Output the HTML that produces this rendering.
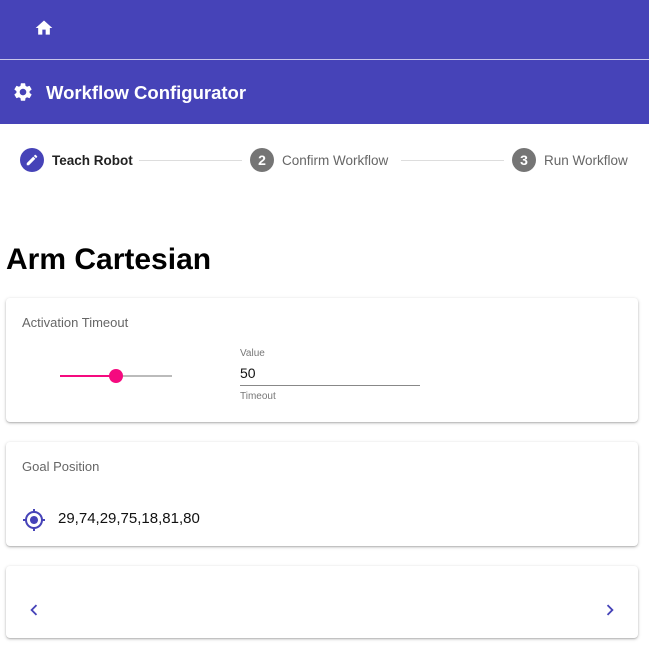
<!DOCTYPE html>
<html><head><style>
*{box-sizing:border-box;margin:0;padding:0}
body{width:649px;height:647px;overflow:hidden;background:#fff;font-family:"Liberation Sans",sans-serif;position:relative}
.abs{position:absolute}
.card{position:absolute;left:6px;width:632px;background:#fff;border-radius:4px;box-shadow:0 1px 3px rgba(0,0,0,.25),0 1px 1px rgba(0,0,0,.12)}
.lbl{position:absolute;left:16px;font-size:13px;color:#666}
.circ{position:absolute;width:24px;height:24px;border-radius:50%;color:#fff;font-size:14px;font-weight:bold;text-align:center;line-height:24px}
.step{position:absolute;font-size:13.5px;top:153px}
.line{position:absolute;top:160px;height:1px;background:#ddd}
</style></head><body>
<div class="abs" style="left:0;top:0;width:649px;height:59px;background:#4643b8"></div>
<div class="abs" style="left:0;top:59px;width:649px;height:1px;background:#c8c6ea"></div>
<div class="abs" style="left:0;top:60px;width:649px;height:64px;background:#4643b8"></div>
<svg class="abs" style="left:34px;top:18px" width="20" height="20" viewBox="0 0 24 24"><path fill="#fff" d="M10 20v-6h4v6h5v-8h3L12 3 2 12h3v8z"/></svg>
<svg class="abs" style="left:12px;top:81px" width="22" height="22" viewBox="0 0 24 24"><path fill="#fff" d="M19.14 12.94c.04-.3.06-.61.06-.94 0-.32-.02-.64-.07-.94l2.030-1.58a.49.49 0 0 0 .12-.61l-1.92-3.32a.49.49 0 0 0-.59-.22l-2.39.96c-.5-.38-1.03-.7-1.62-.94l-.36-2.54a.484.484 0 0 0-.48-.41h-3.84c-.24 0-.43.17-.47.41l-.36 2.54c-.59.24-1.13.57-1.62.94l-2.39-.96c-.22-.08-.47 0-.59.22L2.74 8.87c-.12.21-.08.47.12.61l2.03 1.58c-.05.3-.09.63-.09.94s.02.64.07.94l-2.03 1.58a.49.49 0 0 0-.12.61l1.92 3.32c.12.22.37.29.59.22l2.39-.96c.5.38 1.030.7 1.62.94l.36 2.54c.05.24.24.41.48.41h3.84c.24 0 .44-.17.47-.41l.36-2.54c.59-.24 1.13-.56 1.62-.94l2.39.96c.22.08.47 0 .59-.22l1.92-3.32c.12-.22.07-.47-.12-.61l-2.01-1.58zM12 15.6c-1.98 0-3.6-1.62-3.6-3.6s1.62-3.6 3.6-3.6 3.6 1.62 3.6 3.6-1.62 3.6-3.6 3.6z"/></svg>
<div class="abs" style="left:46px;top:82px;color:#fff;font-size:18.5px;font-weight:bold">Workflow Configurator</div>

<div class="circ" style="left:20px;top:148px;background:#4643b8"><svg width="14" height="14" viewBox="0 0 24 24" style="margin-top:5px"><path fill="#fff" d="M3 17.25V21h3.75L17.81 9.94l-3.75-3.75L3 17.25zM20.71 7.04a1 1 0 0 0 0-1.41l-2.34-2.34a1 1 0 0 0-1.41 0l-1.83 1.83 3.75 3.75 1.830-1.83z"/></svg></div>
<div class="step" style="left:52px;color:#222;font-weight:bold">Teach Robot</div>
<div class="line" style="left:139px;width:103px"></div>
<div class="circ" style="left:250px;top:148px;background:#757575">2</div>
<div class="step" style="left:282px;color:#666">Confirm Workflow</div>
<div class="line" style="left:401px;width:103px"></div>
<div class="circ" style="left:512px;top:148px;background:#757575">3</div>
<div class="step" style="left:544px;color:#666">Run Workflow</div>

<div class="abs" style="left:6px;top:243px;font-size:30px;font-weight:bold;color:#000">Arm Cartesian</div>

<div class="card" style="top:298px;height:124px">
<div class="lbl" style="top:17px">Activation Timeout</div>
<div class="abs" style="left:54px;top:77px;width:56px;height:2px;background:#f50a7f"></div>
<div class="abs" style="left:110px;top:77px;width:56px;height:2px;background:#bbb"></div>
<div class="abs" style="left:103px;top:71px;width:14px;height:14px;border-radius:50%;background:#f50a7f"></div>
<div class="abs" style="left:234px;top:50px;font-size:10px;color:#777">Value</div>
<div class="abs" style="left:234px;top:67px;font-size:14px;color:#111">50</div>
<div class="abs" style="left:234px;top:87px;width:180px;height:1px;background:#888"></div>
<div class="abs" style="left:234px;top:93px;font-size:10px;color:#777">Timeout</div>
</div>

<div class="card" style="top:442px;height:104px">
<div class="lbl" style="top:17px">Goal Position</div>
<svg class="abs" style="left:16px;top:66px" width="24" height="24" viewBox="0 0 24 24"><path fill="#4643b8" d="M12 8c-2.21 0-4 1.79-4 4s1.79 4 4 4 4-1.79 4-4-1.79-4-4-4zm8.94 3A8.994 8.994 0 0 0 13 3.06V1h-2v2.06A8.994 8.994 0 0 0 3.060 11H1v2h2.06A8.994 8.994 0 0 0 11 20.94V23h2v-2.06A8.994 8.994 0 0 0 20.94 13H23v-2h-2.06zM12 19c-3.87 0-7-3.13-7-7s3.13-7 7-7 7 3.13 7 7-3.13 7-7 7z"/></svg>
<div class="abs" style="left:52px;top:68px;font-size:15px;color:#111">29,74,29,75,18,81,80</div>
</div>

<div class="card" style="top:566px;height:72px">
<svg class="abs" style="left:17px;top:33px" width="22" height="22" viewBox="0 0 24 24"><path fill="#4643b8" d="M15.41 7.41 14 6l-6 6 6 6 1.41-1.41L10.83 12z"/></svg>
<svg class="abs" style="left:593px;top:33px" width="22" height="22" viewBox="0 0 24 24"><path fill="#4643b8" d="M10 6 8.59 7.41 13.17 12l-4.58 4.59L10 18l6-6z"/></svg>
</div>
</body></html>
